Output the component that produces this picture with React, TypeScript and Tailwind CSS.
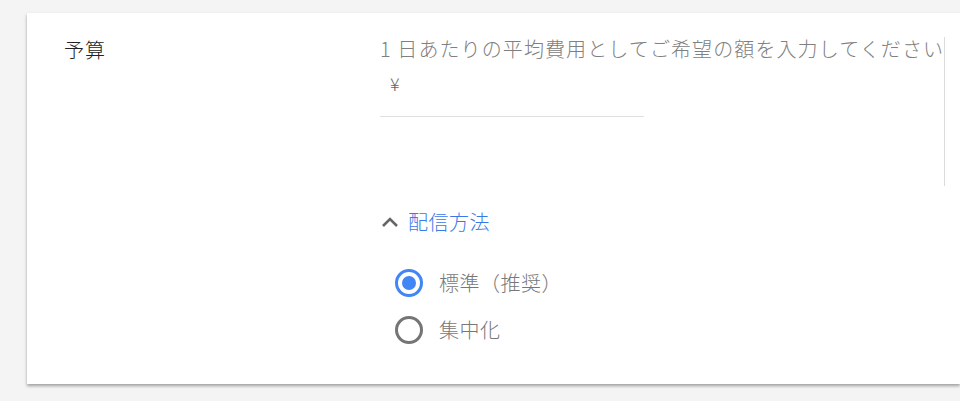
const font = { fontFamily: '"Noto Sans CJK JP", "Noto Sans", sans-serif' };

const Radio = ({ checked, label }: { checked?: boolean; label: string }) => (
  <label className="flex h-[47px] items-center gap-[16px]">
    <span
      className={`flex h-[28px] w-[28px] items-center justify-center rounded-full border-[3px] ${
        checked ? "border-[#4285f4]" : "border-[#757575]"
      }`}
    >
      {checked && <span className="h-[14px] w-[14px] rounded-full bg-[#4285f4]" />}
    </span>
    <span className="text-[20px] font-light tracking-[0.5px] text-[#777]">{label}</span>
  </label>
);

export default function App() {
  return (
    <div className="h-[401px] overflow-hidden bg-[#f4f4f4] pl-[27px] pt-[13px]" style={font}>
      <div className="flex h-[371px] bg-white shadow-[0_2px_3px_rgba(0,0,0,0.35)]">
        <div className="w-[353px] shrink-0 pl-[37px] pt-[21px] text-[20px] font-light leading-[32px] tracking-[1px] text-[#222]">
          予算
        </div>
        <div className="flex flex-col">
          <div className="flex">
            <div className="w-[564px] pt-[20px]">
              <p className="whitespace-nowrap text-[20px] font-light leading-[32px] tracking-[1.1px] text-[#808080]">
                1 日あたりの平均費用としてご希望の額を入力してください
              </p>
              <div className="mt-[6px] w-[264px] border-b border-[#e0e0e0] pb-[21px] pl-[10px] text-[18px] font-light leading-[24px] text-[#666]">
                ¥
              </div>
            </div>
            <div className="mt-[24px] h-[149px] w-px bg-[#dcdcdc]" />
          </div>
          <button className="mt-[20px] flex items-center gap-[9px] text-[20px] font-light leading-[32px] tracking-[0.5px] text-[#3b78e7]">
            <svg width="18" height="12" viewBox="0 0 18 12" className="ml-[1px]">
              <path d="M2 10 L9 3 L16 10" fill="none" stroke="#666" strokeWidth="2.6" />
            </svg>
            配信方法
          </button>
          <div className="ml-[15px] mt-[21px] flex flex-col">
            <Radio checked label="標準（推奨）" />
            <Radio label="集中化" />
          </div>
        </div>
      </div>
    </div>
  );
}
